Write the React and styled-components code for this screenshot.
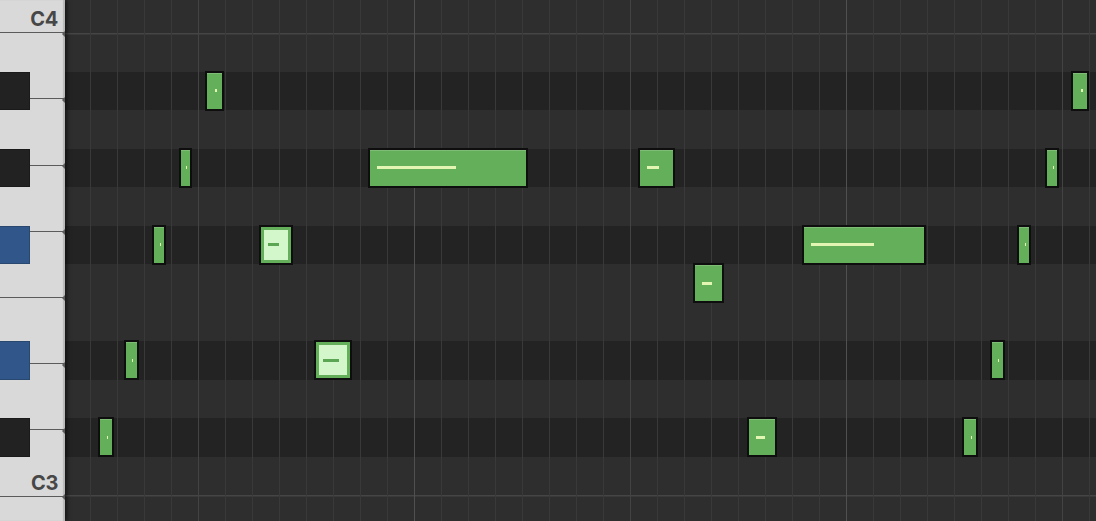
import React from "react";
import styled, { createGlobalStyle } from "styled-components";

const ROW = 38.5;
const ROW_OFFSET = -5.5;
const KEYS_W = 65;

const GlobalStyle = createGlobalStyle`
  html, body {
    margin: 0;
    padding: 0;
    background: #2e2e2e;
    overflow: hidden;
  }
`;

const Roll = styled.div`
  display: flex;
  width: 1096px;
  height: 521px;
  overflow: hidden;
  font-family: Inter, "Liberation Sans", sans-serif;
`;

const Keyboard = styled.div`
  position: relative;
  flex: 0 0 ${KEYS_W}px;
  display: flex;
  flex-direction: column;
  background: #d9d9d9;
  box-shadow: inset -2px 0 1px #b9b9b9, 2px 0 4px rgba(0, 0, 0, 0.55);
  z-index: 2;
  overflow: hidden;
`;

const WhiteKeys = styled.div`
  display: flex;
  flex-direction: column;
  margin-top: -33px;
`;

const WhiteKey = styled.div`
  position: relative;
  flex: 0 0 66.2px;
  box-sizing: border-box;
  display: flex;
  align-items: flex-end;
  justify-content: flex-end;
  padding: 0 7px 1px 0;
  border-bottom: 1.5px solid #5b5b5b;
  color: #474747;
  font-size: 20px;
  font-weight: 700;
  letter-spacing: -0.3px;

  &::after {
    content: "";
    position: absolute;
    right: 0;
    bottom: -4.5px;
    border-right: 3px solid #5b5b5b;
    border-top: 3.75px solid transparent;
    border-bottom: 3.75px solid transparent;
  }
`;

const BlackKey = styled.div`
  position: absolute;
  left: 0;
  width: 30px;
  height: ${ROW}px;
  box-sizing: border-box;
  background: ${(p) => (p.$active ? "#30568a" : "#222222")};
  border: 1px solid ${(p) => (p.$active ? "#284870" : "#1a1a1a")};
  border-left: none;
`;

const Grid = styled.div`
  position: relative;
  flex: 1;
  overflow: hidden;
`;

const Rows = styled.div`
  display: flex;
  flex-direction: column;
  margin-top: ${ROW_OFFSET}px;
`;

const Row = styled.div`
  flex: 0 0 ${ROW}px;
  background: ${(p) => (p.$black ? "#232323" : "#2e2e2e")};
  box-shadow: ${(p) => (p.$octave ? "inset 0 1.5px 0 #454545" : "none")};
`;

const Lines = styled.div`
  position: absolute;
  inset: 0;
  pointer-events: none;
  background:
    linear-gradient(to right, #505050 1.5px, transparent 1.5px) 349px 0 / 432px 100% repeat-x,
    linear-gradient(to right, #434343 1.5px, transparent 1.5px) 133px 0 / 216px 100% repeat-x,
    linear-gradient(to right, #393939 1.5px, transparent 1.5px) 25px 0 / 27px 100% repeat-x;
`;

const Note = styled.div`
  position: absolute;
  box-sizing: border-box;
  height: 40px;
  border: 2px solid #0e0e0e;
  background: ${(p) => (p.$selected ? "#d3f7cb" : "#63af5a")};
  box-shadow: ${(p) =>
    p.$selected
      ? "inset 0 0 0 3px #63af5a"
      : "inset 0 1px 0 rgba(255, 255, 255, 0.18)"};
`;

const Velocity = styled.div`
  position: absolute;
  left: 7px;
  top: 50%;
  height: 3px;
  margin-top: -1.5px;
  background: ${(p) => (p.$selected ? "#5aa652" : "#e3f5b2")};
`;

// rows counted from C4 at the top
const rows = [
  { name: "C4" },
  { name: "B3", octave: true },
  { name: "A#3", black: true },
  { name: "A3" },
  { name: "G#3", black: true },
  { name: "G3" },
  { name: "F#3", black: true },
  { name: "F3" },
  { name: "E3" },
  { name: "D#3", black: true },
  { name: "D3" },
  { name: "C#3", black: true },
  { name: "C3" },
  { name: "B2", octave: true },
];

const whiteKeys = ["C4", "B3", "A3", "G3", "F3", "E3", "D3", "C3", "B2"];

const blackKeys = [
  { row: 2 },
  { row: 4 },
  { row: 6, active: true },
  { row: 9, active: true },
  { row: 11 },
];

const notes = [
  { row: 2, x: 205, w: 19, vel: 2 },
  { row: 2, x: 1071, w: 18, vel: 2 },
  { row: 4, x: 179, w: 13, vel: 1 },
  { row: 4, x: 368, w: 160, vel: 79 },
  { row: 4, x: 638, w: 37, vel: 12 },
  { row: 4, x: 1045, w: 14, vel: 1 },
  { row: 6, x: 152, w: 14, vel: 1 },
  { row: 6, x: 259, w: 34, vel: 11, selected: true },
  { row: 6, x: 802, w: 124, vel: 63 },
  { row: 6, x: 1017, w: 14, vel: 1 },
  { row: 7, x: 693, w: 31, vel: 10 },
  { row: 9, x: 124, w: 15, vel: 1 },
  { row: 9, x: 314, w: 38, vel: 16, selected: true },
  { row: 9, x: 990, w: 15, vel: 1 },
  { row: 11, x: 98, w: 16, vel: 1 },
  { row: 11, x: 747, w: 30, vel: 9 },
  { row: 11, x: 962, w: 16, vel: 1 },
];

export default function App() {
  return (
    <>
      <GlobalStyle />
      <Roll>
        <Keyboard>
          <WhiteKeys>
            {whiteKeys.map((k) => (
              <WhiteKey key={k}>{k.startsWith("C") ? k : ""}</WhiteKey>
            ))}
          </WhiteKeys>
          {blackKeys.map((b) => (
            <BlackKey
              key={b.row}
              $active={b.active}
              style={{ top: ROW_OFFSET + b.row * ROW }}
            />
          ))}
        </Keyboard>
        <Grid>
          <Rows>
            {rows.map((r) => (
              <Row key={r.name} $black={r.black} $octave={r.octave} />
            ))}
          </Rows>
          <Lines />
          {notes.map((n, i) => (
            <Note
              key={i}
              $selected={n.selected}
              style={{
                left: n.x - KEYS_W,
                width: n.w,
                top: ROW_OFFSET + n.row * ROW - 1,
              }}
            >
              <Velocity
                $selected={n.selected}
                style={{
                  width: n.vel,
                  left: n.w < 22 ? Math.round((n.w - 4) / 2 + 0.5) : 7,
                }}
              />
            </Note>
          ))}
        </Grid>
      </Roll>
    </>
  );
}
